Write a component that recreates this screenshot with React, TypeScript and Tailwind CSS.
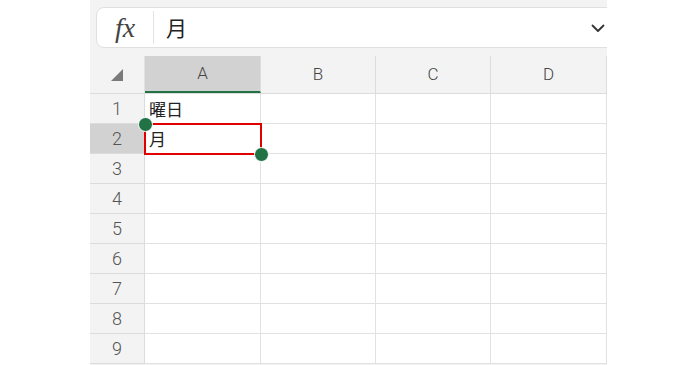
import React from 'react';

const cols = [
  { name: 'A', w: 'w-[116px]' },
  { name: 'B', w: 'w-[115px]' },
  { name: 'C', w: 'w-[115px]' },
  { name: 'D', w: 'w-[116px]' },
];

const rows = [1, 2, 3, 4, 5, 6, 7, 8, 9];
const values: Record<number, string> = { 1: '曜日', 2: '月' };

export default function App() {
  return (
    <div className="w-[698px] h-[365px] bg-white overflow-hidden" style={{ fontFamily: 'Roboto, "Noto Sans CJK JP", sans-serif' }}>
      <div className="ml-[90px] w-[517px] h-[365px] overflow-hidden bg-[#f3f3f3]">
        {/* formula bar */}
        <div className="pt-[7px] pl-[6px]">
          <div className="w-[540px] h-[41px] bg-white border border-[#e0e0e0] rounded-l-lg flex items-center">
            <div className="w-[56px] flex justify-center text-[28px] leading-none italic text-[#444]" style={{ fontFamily: '"Liberation Serif", serif' }}>
              fx
            </div>
            <div className="w-px h-[33px] bg-[#e3e3e3]" />
            <div className="flex-1 pl-[12px] text-[21px] text-[#222]" style={{ fontFamily: '"Noto Sans CJK JP", sans-serif' }}>月</div>
            <svg width="16" height="16" viewBox="0 0 16 16" className="mr-[29px]">
              <path d="M2.5 5.5 L8 11 L13.5 5.5" fill="none" stroke="#333" strokeWidth="1.8" strokeLinecap="round" strokeLinejoin="round" />
            </svg>
          </div>
        </div>

        {/* grid */}
        <div className="relative mt-[8px]">
          <div className="flex h-[38px] border-b border-[#dcdcdc]">
            <div className="w-[55px] flex items-end justify-center pb-[12px] border-r border-[#e1e1e1]">
              <svg width="12" height="12" viewBox="0 0 12 12">
                <path d="M12 0 L12 12 L0 12 Z" fill="#7a7a7a" />
              </svg>
            </div>
            {cols.map((c, i) => (
              <div
                key={c.name}
                className={`${c.w} flex items-center justify-center text-[17px] font-light text-[#444] border-r border-[#dcdcdc] ${i === 0 ? 'bg-[#d2d2d2] border-b-2 border-b-[#217346]' : 'bg-[#f3f3f3]'}`}
              >
                {c.name}
              </div>
            ))}
          </div>
          {rows.map((r) => (
            <div key={r} className="flex h-[30px]">
              <div
                className={`w-[55px] flex items-center justify-center text-[18px] font-light text-[#555] border-r border-b border-[#dcdcdc] ${r === 2 ? 'bg-[#d2d2d2]' : 'bg-[#f3f3f3]'}`}
              >
                {r}
              </div>
              {cols.map((c, i) => (
                <div key={c.name} className={`${c.w} bg-white border-r border-b border-[#e1e1e1] flex items-center pl-[4px] text-[17px] text-[#222]`} style={{ fontFamily: '"Noto Sans CJK JP", sans-serif' }}>
                  {i === 0 ? values[r] ?? '' : ''}
                </div>
              ))}
            </div>
          ))}

          {/* selection overlay */}
          <div className="absolute left-[54px] top-[67px] w-[118px] h-[32px] border-2 border-[#e00000] pointer-events-none" />
          <div className="absolute left-[48px] top-[61px] w-[15px] h-[15px] rounded-full bg-[#217346] border border-white" />
          <div className="absolute left-[164px] top-[91px] w-[15px] h-[15px] rounded-full bg-[#217346] border border-white" />
        </div>
      </div>
    </div>
  );
}
